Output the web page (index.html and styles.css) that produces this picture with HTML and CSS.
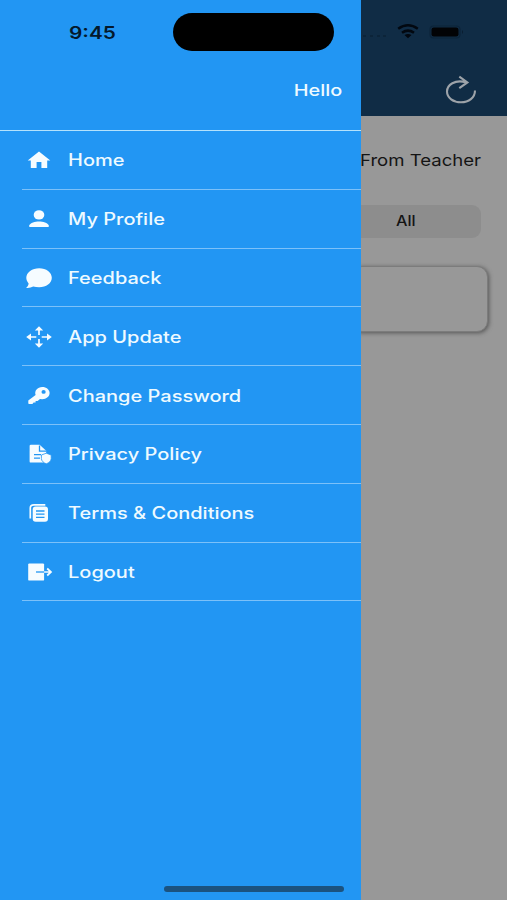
FILE: index.html
```
<!DOCTYPE html>
<html lang="en">
<head>
    <meta charset="UTF-8">
    <meta name="viewport" content="width=device-width, initial-scale=1.0">
    <title>Menu</title>
    <link rel="stylesheet" href="styles.css">
</head>
<body>
    <div class="screen">
        <nav class="drawer">
            <header class="drawer-header">
                <span class="clock wide">9:45</span>
                <span class="hello wide">Hello</span>
            </header>

            <ul class="menu">
                <li>
                    <svg class="icon" viewBox="0 0 30 26"><path d="M15 4.5 L26.3 13.4 H23.2 V20.9 H17.4 V15 H12.6 V20.9 H6.8 V13.4 H3.7 Z"/></svg>
                    <span class="wide">Home</span>
                </li>
                <li>
                    <svg class="icon" viewBox="0 0 30 26"><ellipse cx="15" cy="8.9" rx="5.3" ry="4.7"/><path d="M5.3 20.9 V19.3 C6.2 16.7 11 15.4 15 15.4 S23.8 16.7 24.7 19.3 V20.9 Z"/></svg>
                    <span class="wide">My Profile</span>
                </li>
                <li>
                    <svg class="icon" viewBox="0 0 30 26"><path d="M15.2 3.2 C22.2 3.2 27.8 7.4 27.8 12.8 S22.2 22.3 15.2 22.3 C13 22.3 11 21.9 9.2 21.6 C7.2 22.8 4.6 23.1 2.1 22.9 C3.4 21.7 4.5 20 4.6 18.4 C3.2 16.8 2.3 14.9 2.3 12.8 C2.3 7.4 8.2 3.2 15.2 3.2 Z"/></svg>
                    <span class="wide">Feedback</span>
                </li>
                <li>
                    <svg class="icon" viewBox="0 0 30 26"><path class="stroke thin" d="M15 4 V11 M15 15 V22 M4 13 H12.3 M17.7 13 H26"/><path d="M15 2.2 L19.2 6.4 H10.8 Z M15 23.8 L19.2 19.6 H10.8 Z M2.2 13 L7 9.4 V16.6 Z M27.8 13 L23 9.4 V16.6 Z"/></svg>
                    <span class="wide">App Update</span>
                </li>
                <li>
                    <svg class="icon" viewBox="0 0 30 26"><path fill-rule="evenodd" d="M18.2 4 C22.5 4 25.6 6.7 25.6 10.1 S22.5 16.2 18.2 16.2 L16 16 L13.6 18 H11.6 V19.6 H9.6 L8.4 20.9 H5.4 C4.7 20.9 4.3 20.5 4.3 19.9 V17.4 L11.6 12 C10.1 7.7 13.6 4 18.2 4 Z M19.6 7 A2.1 1.9 0 1 0 19.6 10.8 A2.1 1.9 0 1 0 19.6 7 Z"/></svg>
                    <span class="wide">Change Password</span>
                </li>
                <li>
                    <svg class="icon" viewBox="0 0 30 26"><path d="M7 3.8 H15.6 L22.2 9.8 V21.6 H7 Q5.6 21.6 5.6 20.4 V5 Q5.6 3.8 7 3.8 Z"/><path class="cut" d="M15.5 4.5 V10.2 H22.5 M10 13.7 H17 M10 17.2 H16"/><path class="outlined" d="M22.3 12.2 L27.2 14 V17.5 C27.2 20 25 21.8 22.3 22.8 C19.6 21.8 17.4 20 17.4 17.5 V14 Z"/></svg>
                    <span class="wide">Privacy Policy</span>
                </li>
                <li>
                    <svg class="icon" viewBox="0 0 30 26"><path class="stroke thin" d="M6.3 18.5 V8 Q6.3 4.9 10 4.9 H21.3"/><rect x="8.7" y="6.5" width="15.3" height="15.3" rx="3"/><path class="cut" d="M12 11 H20.5 M12 14.2 H20.5 M12 17.4 H20.5"/></svg>
                    <span class="wide">Terms &amp; Conditions</span>
                </li>
                <li>
                    <svg class="icon" viewBox="0 0 30 26"><rect x="4.2" y="4.4" width="15.9" height="17.2" rx="1.2"/><path class="cut" d="M12 13 H20.1"/><path class="stroke thin" d="M20.1 13 H26.8 M23.2 9.5 L27 13 L23.2 16.5"/></svg>
                    <span class="wide">Logout</span>
                </li>
            </ul>
        </nav>

        <!-- Page behind the open drawer -->
        <main class="page">
            <header class="page-header">
                <div class="status">
                    <svg class="signal" viewBox="0 0 26 4"><path d="M2 2 h3 M9 2 h3 M16 2 h3 M22 2 h3"/></svg>
                    <svg class="wifi" viewBox="0 0 22 15"><path d="M1.2 4.8 Q11 -2.2 20.8 4.8 M5 8.8 Q11 4.4 17 8.8"/><path class="dot" d="M7.5 11 Q11 8.8 14.5 11 L11 14.3 Z"/></svg>
                    <svg class="battery" viewBox="0 0 36 14"><rect class="case" x="1" y="1" width="30" height="12" rx="3.5"/><rect x="2.5" y="2.4" width="27" height="9.2" rx="2.4"/><path class="tip" d="M33 5 Q35 7 33 9 Z"/></svg>
                </div>
                <svg class="refresh" viewBox="0 0 32 30"><path d="M20.7 7.2 C10 4.4 2 9.6 2 16.6 C2 23 8.4 27.3 16 27.3 C23.7 27.3 30 22.8 30 15.5 M14.3 1.6 L22.4 7.4 L14.3 13.2"/></svg>
            </header>
            <div class="content">
                <div class="heading"><span class="wide">From Teacher</span></div>
                <div class="filter"><span class="wide">All</span></div>
                <div class="card"></div>
            </div>
        </main>

        <div class="island"></div>
        <div class="home-bar"></div>
    </div>
</body>
</html>
```
FILE: styles.css
```
body {
    margin: 0;
    font-family: Inter, 'Liberation Sans', sans-serif;
    background-color: #989898;
}

.screen {
    position: relative;
    display: flex;
    width: 507px;
    height: 900px;
    overflow: hidden;
}

/* wide letterforms used for every label */
.wide {
    display: inline-block;
    white-space: nowrap;
    transform: scaleX(1.205);
    transform-origin: left center;
}

/* Drawer */
.drawer {
    width: 361.4px;
    flex-shrink: 0;
    background-color: #2296f3;
    color: #eefaff;
}

.drawer-header {
    display: flex;
    flex-direction: column;
    box-sizing: border-box;
    height: 131px;
    padding: 20px 19.5px 0 69px;
    border-bottom: 1px solid #b4e2fc;
}

.clock {
    color: #04192b;
    font-size: 17.3px;
    font-weight: 600;
    line-height: 25px;
}

.hello {
    align-self: flex-end;
    margin-top: 33px;
    font-size: 16.5px;
    font-weight: 500;
    line-height: 24px;
    transform-origin: right center;
}

.menu {
    list-style: none;
    margin: 0 0 0 22px;
    padding: 0;
}

.menu li {
    display: flex;
    align-items: center;
    box-sizing: border-box;
    height: 58.8px;
    padding: 1.2px 0 0 2px;
    border-bottom: 1px solid #7cc1f9;
    font-size: 16.6px;
    font-weight: 500;
}

.icon {
    width: 30px;
    height: 26px;
    margin-right: 14px;
    fill: #f6fcff;
}

.icon .stroke {
    fill: none;
    stroke: #f6fcff;
    stroke-width: 2;
}

.icon .thin {
    stroke-width: 1.7;
}

.icon .cut {
    fill: none;
    stroke: #2296f3;
    stroke-width: 1.3;
}

.icon .outlined {
    stroke: #2296f3;
    stroke-width: 0.8;
}

/* Dimmed page */
.page {
    flex: 1;
    min-width: 0;
    overflow: hidden;
    background-color: #989898;
    color: #141414;
}

.page-header {
    display: flex;
    flex-direction: column;
    box-sizing: border-box;
    height: 115.5px;
    padding-top: 22px;
    background-color: #102c45;
}

.status {
    display: flex;
    align-items: center;
    height: 19px;
}

.signal {
    width: 26px;
    height: 4px;
    margin: 9px 10px 0 0;
    stroke: #0c2439;
    stroke-width: 2;
}

.wifi {
    width: 22px;
    height: 15px;
    margin-right: 10px;
    fill: none;
    stroke: #020810;
    stroke-width: 2.5;
}

.wifi .dot {
    fill: #020810;
    stroke: none;
}

.battery {
    width: 36px;
    height: 14px;
    fill: #020305;
}

.battery .case {
    fill: none;
    stroke: #0c2439;
    stroke-width: 1.2;
}

.battery .tip {
    fill: #0a1d2f;
}

.refresh {
    width: 32px;
    height: 30px;
    margin: 33.5px 0 0 84px;
    fill: none;
    stroke: #9da3a9;
    stroke-width: 2.1;
}

.heading {
    height: 89.5px;
    padding-top: 32px;
    box-sizing: border-box;
    font-size: 16.5px;
    line-height: 24px;
}

.heading .wide {
    margin-left: -1px;
    transform: scaleX(1.125);
}

.filter {
    box-sizing: border-box;
    width: 119.5px;
    height: 33px;
    padding-left: 35px;
    background-color: #8d8d8d;
    border-radius: 0 9px 9px 0;
    font-size: 13.8px;
    font-weight: 500;
    line-height: 33px;
}

.filter .wide {
    transform: scaleX(1.17);
}

.card {
    box-sizing: border-box;
    width: 137px;
    height: 66px;
    margin: 28px 0 0 -10px;
    border: 1px solid #7c7c7c;
    border-radius: 11px;
    box-shadow: 1px 1px 4px #555;
    background-color: #989898;
}

/* Device overlays */
.island {
    position: absolute;
    left: 173.3px;
    top: 12.7px;
    width: 161.2px;
    height: 38.6px;
    border-radius: 20px;
    background-color: #000;
}

.home-bar {
    position: absolute;
    left: 164px;
    top: 886px;
    width: 180px;
    height: 5.5px;
    border-radius: 3px;
    background-color: #1b527f;
}
```
